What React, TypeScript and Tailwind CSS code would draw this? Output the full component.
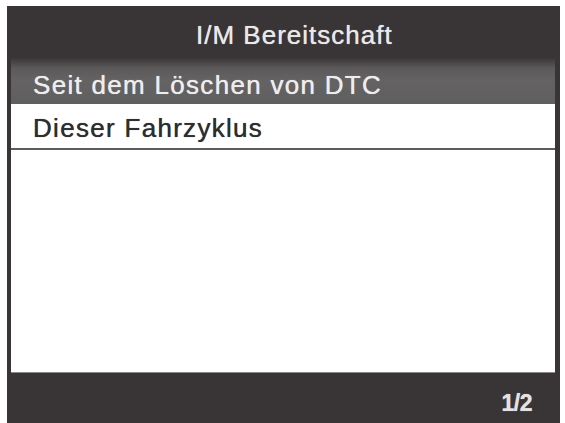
import React from 'react';

const rows = [
  { label: 'Seit dem Löschen von DTC', active: true },
  { label: 'Dieser Fahrzyklus', active: false },
];

export default function App() {
  return (
    <div className="h-[423px] w-[565px] overflow-hidden bg-white pl-[7px] pt-[6px] font-['Liberation_Sans'] [text-shadow:0_0_0.7px_currentColor]">
      <div className="flex h-[417px] w-[553px] flex-col bg-[#393435] pl-[4px] pr-[5px]">
        {/* title bar */}
        <div className="h-[52px] shrink-0 pl-[185px] pt-[16px]">
          <span className="text-[26px] leading-[26px] tracking-[1px] text-[#e8e8e8]">I/M Bereitschaft</span>
        </div>

        {/* menu list */}
        <div className="flex h-[315px] shrink-0 flex-col bg-white">
          {rows.map((row) =>
            row.active ? (
              <div
                key={row.label}
                className="h-[46px] bg-[linear-gradient(to_bottom,#3b3637_0px,#5b5959_10px,#646262_22px,#605f5f_100%)] pl-[22px] pt-[14px] text-[26px] leading-[26px] tracking-[1.3px] text-[#ededed]"
              >
                {row.label}
              </div>
            ) : (
              <div
                key={row.label}
                className="h-[46px] border-b-2 border-[#5c5c5c] pl-[22px] pt-[11px] text-[26px] leading-[26px] tracking-[1.3px] text-[#2e2e2e]"
              >
                {row.label}
              </div>
            )
          )}
          <div className="flex-1 border-b border-[#8a8a8a]" />
        </div>

        {/* footer */}
        <div className="flex flex-1 items-start justify-end pr-[23px] pt-[19px]">
          <span className="text-[23px] font-bold leading-[23px] tracking-[-0.5px] text-[#e2e2e2]">1/2</span>
        </div>
      </div>
    </div>
  );
}
